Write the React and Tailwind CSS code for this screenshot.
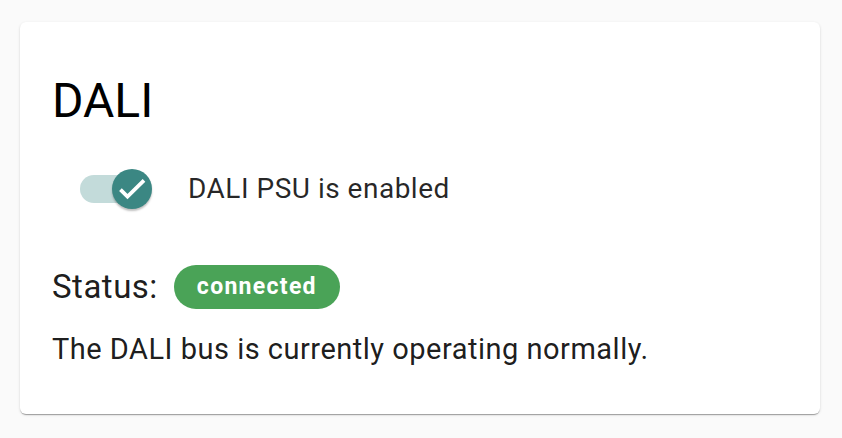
export default function App() {
  return (
    <div className="min-h-screen bg-[#fafafa] pl-5 pr-[22px] pt-[22px] font-['Roboto',sans-serif]">
      <div className="h-[392px] rounded-[6px] bg-white px-8 pt-[51px] shadow-[0_2px_1px_-1px_rgba(0,0,0,0.2),0_1px_1px_0_rgba(0,0,0,0.14),0_1px_3px_0_rgba(0,0,0,0.12)]">
        <h1 className="text-[48px] leading-[56px] text-black">DALI</h1>
        <div className="mt-[39px] flex items-center pl-[26px]">
          <div className="relative h-[40px] w-[76px]">
            <div className="absolute left-[2px] top-[6px] h-[28px] w-[68px] rounded-full bg-[#c3dbda]" />
            <div className="absolute left-[34px] top-0 flex h-[40px] w-[40px] items-center justify-center rounded-full bg-[#3b8783] shadow-[0_2px_2px_rgba(0,0,0,0.25)]">
              <svg width="36" height="36" viewBox="0 0 24 24" fill="none" stroke="white" strokeWidth="2.5">
                <path d="M4.3 12.4L9 17.1 20 6.3" />
              </svg>
            </div>
          </div>
          <span className="ml-[34px] text-[28px] tracking-[0.5px] text-black/85">DALI PSU is enabled</span>
        </div>
        <div className="mt-[52px] flex items-center">
          <span className="text-[33px] tracking-[0.5px] text-black/90">Status:</span>
          <span className="ml-[16px] flex h-[44px] items-center rounded-full bg-[#4aa357] px-[23px] text-[23px] font-bold tracking-[1.3px] text-white">connected</span>
        </div>
        <p className="mt-[16px] text-[29px] tracking-[0.5px] text-black/90">The DALI bus is currently operating normally.</p>
      </div>
    </div>
  );
}
